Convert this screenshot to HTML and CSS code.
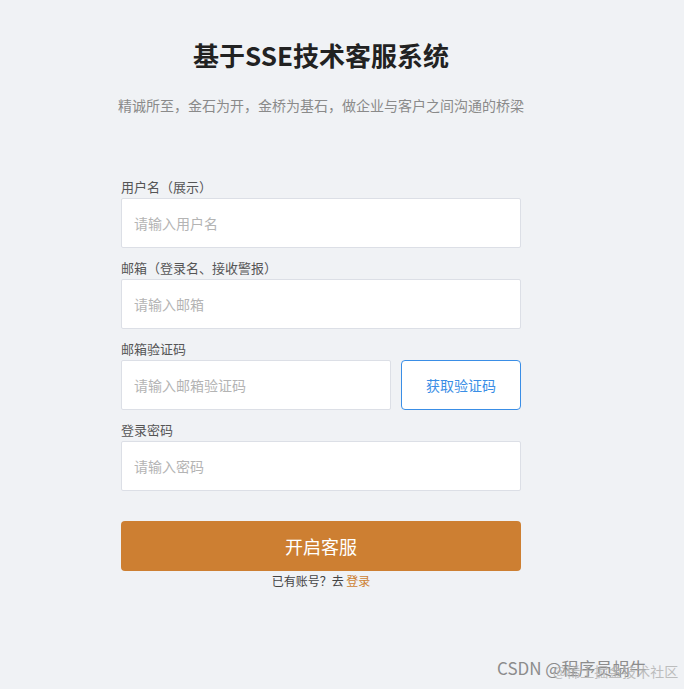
FILE: index.html
```html
<!DOCTYPE html>
<html lang="zh">
<head>
<meta charset="utf-8">
<link rel="stylesheet" href="styles.css">
</head>
<body>
<div class="page">
  <div class="wrap">
    <h1 class="title">基于SSE技术客服系统</h1>
    <p class="subtitle">精诚所至，金石为开，金桥为基石，做企业与客户之间沟通的桥梁</p>
    <form class="form">
      <div class="field">
        <label class="label">用户名（展示）</label>
        <input class="input" type="text" placeholder="请输入用户名">
      </div>
      <div class="field">
        <label class="label">邮箱（登录名、接收警报）</label>
        <input class="input" type="text" placeholder="请输入邮箱">
      </div>
      <div class="field">
        <label class="label">邮箱验证码</label>
        <div class="row">
          <input class="input code" type="text" placeholder="请输入邮箱验证码">
          <button type="button" class="codebtn">获取验证码</button>
        </div>
      </div>
      <div class="field">
        <label class="label">登录密码</label>
        <input class="input" type="password" placeholder="请输入密码">
      </div>
      <button type="button" class="submit">开启客服</button>
      <p class="login">已有账号？去 <a class="link">登录</a></p>
    </form>
  </div>
  <div class="watermark"><span class="wm-main">CSDN @程序员蜗牛</span><span class="wm-over">@稀土掘金技术社区</span></div>
</div>
</body>
</html>
```
FILE: styles.css
```css
* { box-sizing: border-box; }
html, body { margin: 0; padding: 0; }
body {
  background: #f0f2f5;
  font-family: "Noto Sans CJK SC", "Liberation Sans", sans-serif;
  width: 684px;
  height: 689px;
  overflow: hidden;
}
.page { position: relative; width: 684px; height: 689px; }
.wrap {
  width: 400px;
  margin-left: 121px;
  display: flex;
  flex-direction: column;
  align-items: center;
}
.title {
  margin: 37px 0 0;
  font-size: 26px;
  line-height: 36px;
  font-weight: 700;
  color: #222;
  white-space: nowrap;
}
.subtitle {
  margin: 22px 0 0;
  font-size: 14px;
  line-height: 20px;
  color: #8a8a8a;
  white-space: nowrap;
}
.form {
  width: 400px;
  margin-top: 63px;
  display: flex;
  flex-direction: column;
}
.field { display: flex; flex-direction: column; margin-bottom: 11px; }
.label {
  font-size: 13px;
  line-height: 18px;
  color: #555;
  margin-bottom: 2px;
}
.input {
  width: 400px;
  height: 50px;
  border: 1px solid #dcdfe6;
  border-radius: 2px;
  background: #fff;
  padding: 0 12px;
  font-size: 14px;
  font-family: inherit;
  color: #333;
  outline: none;
}
.input::placeholder { color: #b4b4b4; }
.row { display: flex; gap: 10px; }
.input.code { width: 270px; }
.codebtn {
  width: 120px;
  height: 50px;
  border: 1px solid #3a8ee6;
  border-radius: 4px;
  background: #fff;
  color: #3a8ee6;
  font-size: 14px;
  font-family: inherit;
}
.submit {
  margin-top: 19px;
  width: 400px;
  height: 50px;
  border: none;
  border-radius: 4px;
  background: #cd7f32;
  color: #fff;
  font-size: 18px;
  font-family: inherit;
}
.login {
  margin: 1px 0 0;
  text-align: center;
  font-size: 12px;
  line-height: 18px;
  color: #444;
}
.link { color: #cd7f32; }
.watermark {
  position: absolute;
  left: 497px;
  top: 656px;
  width: 185px;
  height: 26px;
}
.wm-main {
  position: absolute;
  left: 0;
  top: 0;
  font-size: 17px;
  line-height: 24px;
  color: #8c8c8c;
  white-space: nowrap;
}
.wm-over {
  position: absolute;
  left: 56px;
  top: 5px;
  font-size: 14px;
  line-height: 20px;
  color: #b0b0b0;
  opacity: 0.8;
  white-space: nowrap;
}
```
